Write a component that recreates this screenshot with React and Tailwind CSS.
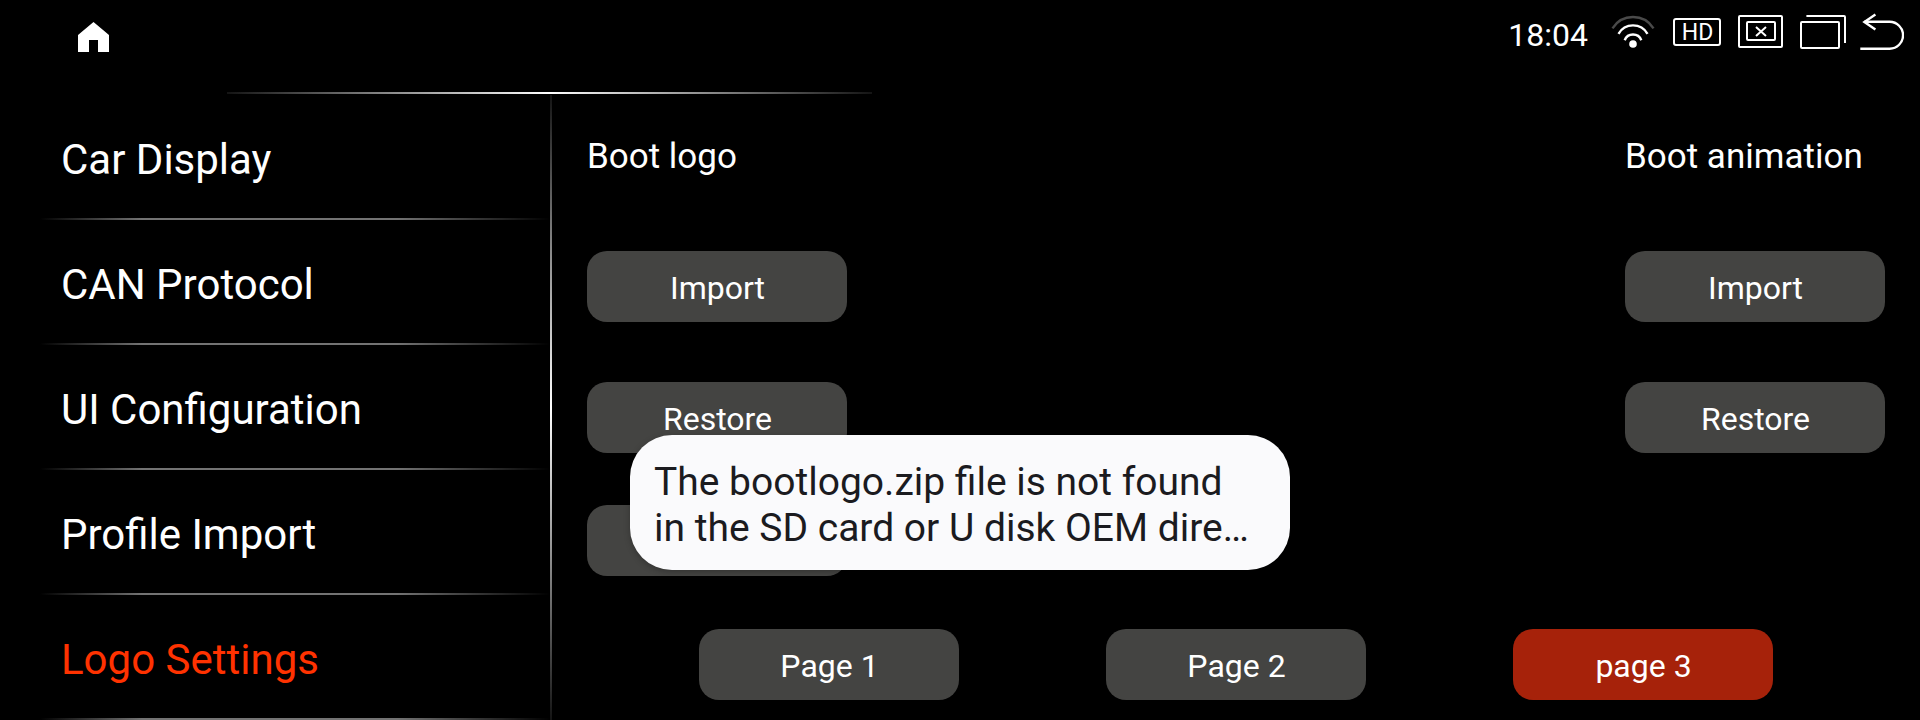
const menu = ["Car Display", "CAN Protocol", "UI Configuration", "Profile Import", "Logo Settings"];

function Button({ children, active = false }) {
  return (
    <button
      className={`flex h-[71px] w-[260px] shrink-0 items-center justify-center rounded-[20px] pl-px pt-[3px] text-[32px] leading-none ${
        active ? "bg-[#a6220a]" : "bg-[#444442]"
      }`}
    >
      {children}
    </button>
  );
}

function StatusIcons() {
  return (
    <div className="flex h-16 items-start">
      <svg className="ml-[23px] h-16 w-11" viewBox="0 0 44 64" fill="none" stroke="white" strokeWidth="2.4">
        <circle cx="22" cy="44" r="3.8" fill="white" stroke="none" />
        <path d="M13.7 40.2a8.9 8.9 0 0 1 16.6 0" />
        <path d="M7.5 33.8a16.7 16.7 0 0 1 29 0" />
        <path d="M1.5 28.3a24.2 24.2 0 0 1 41 0" stroke="#4a4a4a" />
      </svg>
      <div className="ml-[18px] mt-[18px] flex h-7 w-12 items-center justify-center rounded-[3px] border-2 border-white pl-px pt-px text-[23px] leading-none">
        HD
      </div>
      <svg className="ml-[17px] h-16 w-[45px]" viewBox="0 0 45 64" fill="none" stroke="white" strokeWidth="2">
        <rect x="1" y="16" width="43" height="31" rx="1" />
        <rect x="9" y="22" width="28" height="18" rx="1" />
        <path d="M18 27l10 9M28 27l-10 9" />
      </svg>
      <svg className="ml-[17px] h-16 w-[46px]" viewBox="0 0 46 64" fill="none" stroke="white" strokeWidth="2">
        <rect x="1" y="22" width="38" height="26" rx="1" />
        <path d="M6.4 16H44q1 0 1 1V43" />
      </svg>
      <svg className="ml-[14px] h-16 w-11" viewBox="0 0 44 64" fill="none" stroke="white" strokeWidth="2.4">
        <path d="M0.3 48.7H29.6a13.4 13.4 0 0 0 0-26.9H4.4" />
        <path d="M15.4 14.6L4.4 21.9L15.4 29.4" />
      </svg>
    </div>
  );
}

export default function App() {
  return (
    <div className="relative flex h-[720px] w-[1920px] flex-col overflow-hidden bg-black font-[Roboto,sans-serif] text-white">
      <header className="flex h-[92px] shrink-0 items-start justify-between pl-[78px] pr-[16px]">
        <svg className="mt-[22px] h-[30px] w-[31px]" viewBox="0 0 31 30" fill="white">
          <path d="M15.5 0L31 13V30H20V18H11V30H0V13Z" />
        </svg>
        <div className="flex items-start">
          <span className="mt-[19px] text-[32px] leading-8">18:04</span>
          <StatusIcons />
        </div>
      </header>
      <div className="ml-[227px] h-0.5 w-[645px] shrink-0 bg-linear-to-r/srgb from-[#141414] via-white to-[#141414]" />
      <div className="flex min-h-0 flex-1">
        <nav className="flex w-[550px] shrink-0 flex-col pl-10">
          {menu.map((item, i) => (
            <div key={item} className={`flex shrink-0 flex-col justify-end ${i === 0 ? "h-[126px]" : "h-[125px]"}`}>
              <div className={`mb-[33px] pl-[21px] text-[42px] leading-[50px] ${i === 4 ? "text-[#ff3200]" : ""}`}>
                {item}
              </div>
              <div className="h-0.5 w-full bg-linear-to-r/srgb from-transparent from-0% via-[#737373] via-20% to-[#737373] to-70% mask-r-from-70% mask-r-to-100%" />
            </div>
          ))}
        </nav>
        <div className="mt-px w-0.5 shrink-0 bg-linear-to-b/srgb from-[#141414] via-white to-[#141414]" />
        <main className="flex flex-1 flex-col pl-[35px] pr-[35px]">
          <div className="flex justify-between">
            <section className="flex w-[260px] flex-col">
              <h2 className="mt-[43px] h-10 text-[35px] leading-10">Boot logo</h2>
              <div className="mt-[74px] flex flex-col">
                <Button>Import</Button>
                <div className="mt-[60px]"><Button>Restore</Button></div>
                <div className="mt-[52px]"><Button /></div>
              </div>
            </section>
            <section className="flex w-[260px] flex-col">
              <h2 className="mt-[43px] h-10 whitespace-nowrap text-[35px] leading-10">Boot animation</h2>
              <div className="mt-[74px] flex flex-col gap-[60px]">
                <Button>Import</Button>
                <Button>Restore</Button>
              </div>
            </section>
          </div>
          <div className="ml-[112px] mt-[53px] flex gap-[147px]">
            <Button>Page 1</Button>
            <Button>Page 2</Button>
            <Button active>page 3</Button>
          </div>
        </main>
      </div>
      <div className="absolute left-[630px] top-[435px] h-[135px] w-[660px] rounded-[42px] bg-[#fafafc] pl-6 pt-[24px] text-[39px] leading-[46px] text-[#1b1b1f] shadow-[0_2px_6px_rgba(0,0,0,0.25)]">
        <div className="whitespace-nowrap">The bootlogo.zip file is not found</div>
        <div className="whitespace-nowrap">in the SD card or U disk OEM dire…</div>
      </div>
    </div>
  );
}
